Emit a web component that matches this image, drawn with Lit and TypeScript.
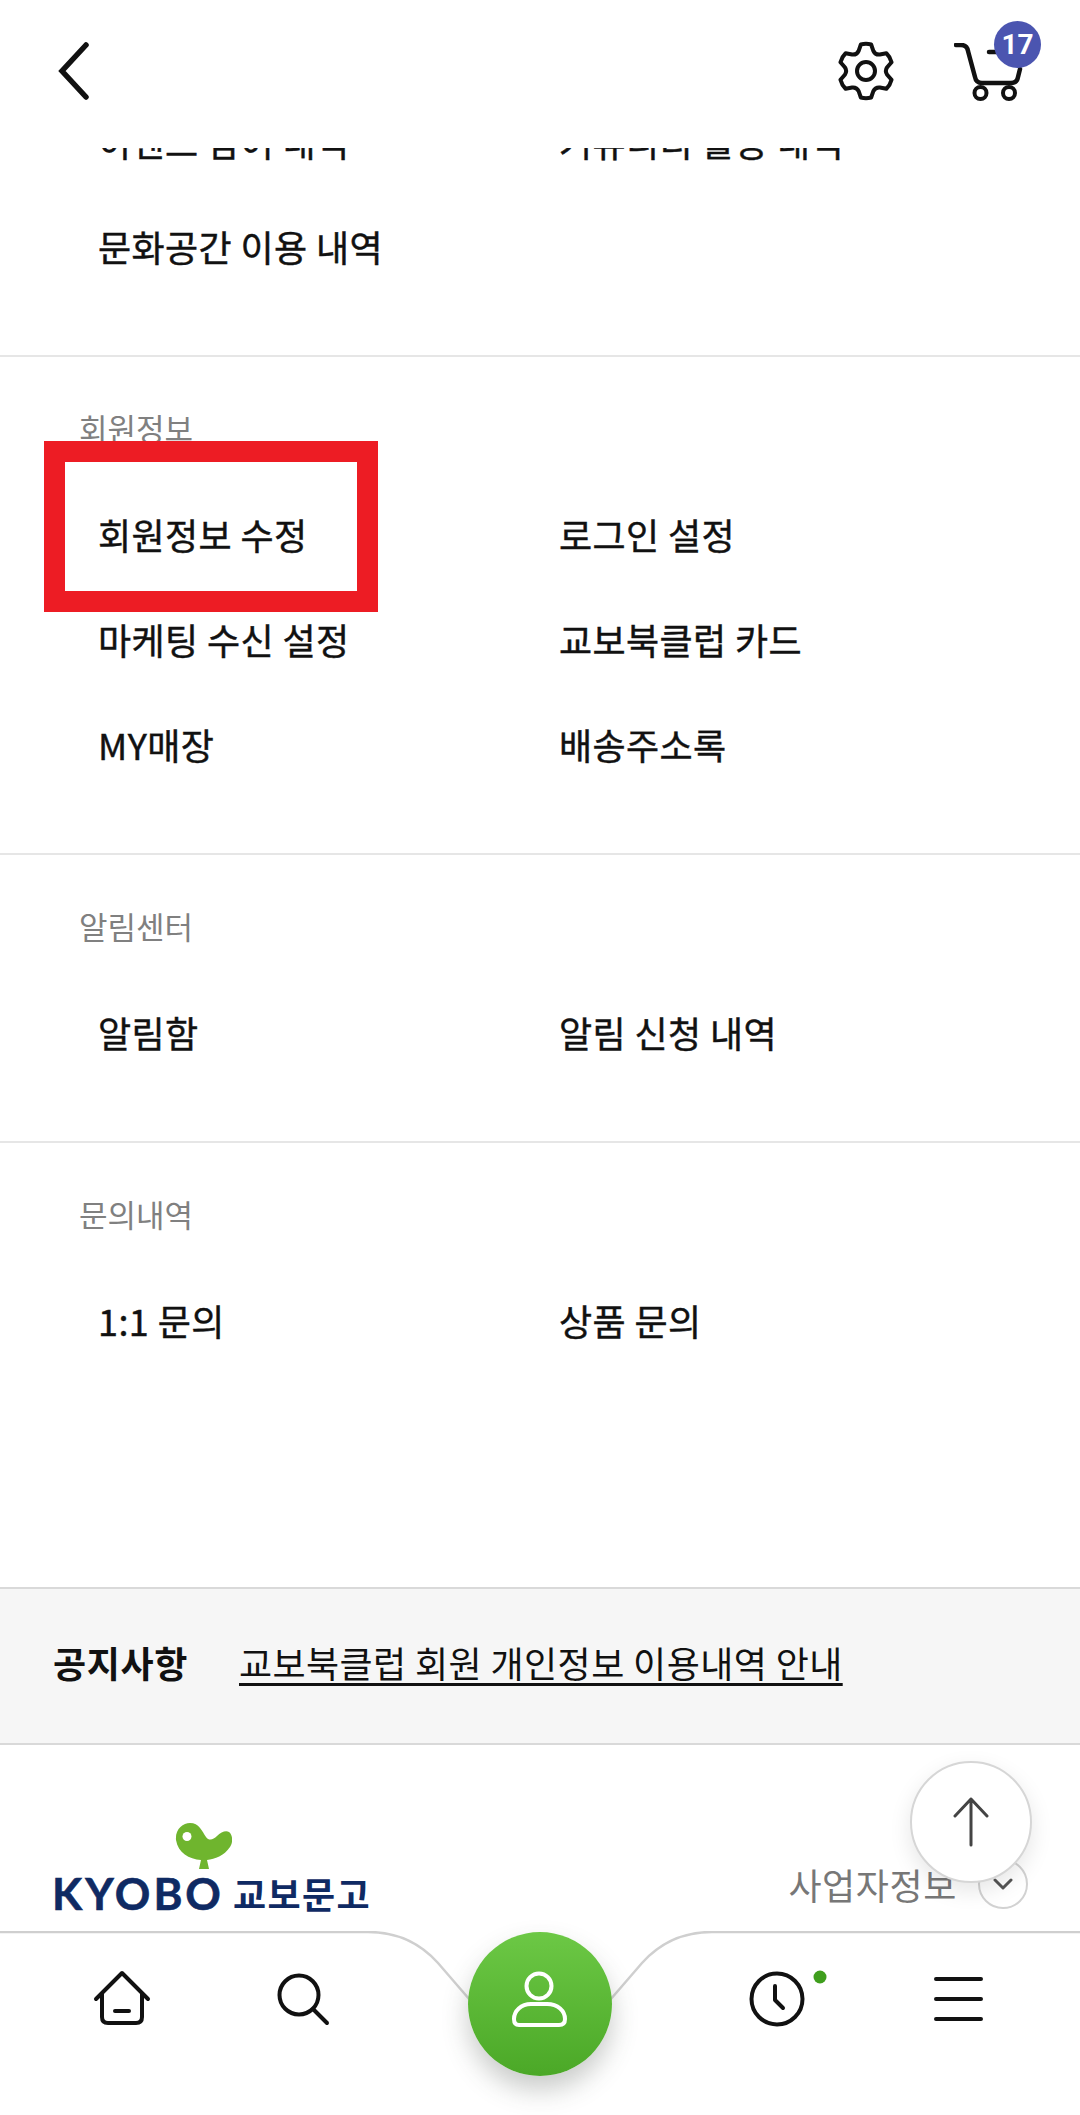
import { LitElement, html, css, svg } from "lit";
import { customElement } from "lit/decorators.js";

type Section = { label?: string; items: string[] };

const SECTIONS: Section[] = [
  { items: ["이벤트 참여 내역", "커뮤니티 활동 내역", "문화공간 이용 내역"] },
  { label: "회원정보", items: ["회원정보 수정", "로그인 설정", "마케팅 수신 설정", "교보북클럽 카드", "MY매장", "배송주소록"] },
  { label: "알림센터", items: ["알림함", "알림 신청 내역"] },
  { label: "문의내역", items: ["1:1 문의", "상품 문의"] },
];

function gearPath(cx: number, cy: number, ro: number, ri: number): string {
  const pt = (r: number, deg: number) => {
    const a = (deg * Math.PI) / 180;
    return `${(cx + r * Math.cos(a)).toFixed(2)} ${(cy + r * Math.sin(a)).toFixed(2)}`;
  };
  let d = "";
  for (let i = 0; i < 6; i++) {
    const c = -90 + i * 60;
    d += i === 0 ? `M${pt(ro, c - 11)}` : `L${pt(ro, c - 11)}`;
    d += `Q${pt(ro + 1, c)} ${pt(ro, c + 11)}`;
    d += `L${pt(ri + 1.5, c + 20)}`;
    d += `Q${pt(ri - 1.5, c + 30)} ${pt(ri + 1.5, c + 40)}`;
  }
  return d + "Z";
}

@customElement("app-root")
export class AppRoot extends LitElement {
  static styles = css`
    :host {
      display: block;
      position: relative;
      width: 1080px;
      height: 2115px;
      overflow: hidden;
      background: #fff;
      font-family: "Noto Sans CJK KR", "Noto Sans", sans-serif;
      color: #111;
    }
    .header {
      position: relative;
      z-index: 2;
      height: 148px;
      background: #fff;
      display: flex;
      align-items: flex-start;
      padding: 42px 0 0 58px;
      box-sizing: border-box;
    }
    .back { width: 32px; height: 58px; display: block; }
    .gear { width: 60px; height: 60px; display: block; margin-left: 746px; margin-top: -1px; }
    .cart { position: relative; width: 70px; height: 60px; margin-left: 58px; margin-top: 1px; }
    .cart svg { display: block; }
    .badge {
      position: absolute;
      left: 40px;
      top: -22px;
      width: 47px;
      height: 47px;
      border-radius: 50%;
      background: #4b55b0;
      color: #fff;
      font: 700 28px/47px Roboto, sans-serif;
      text-align: center;
    }
    .content { margin-top: -58px; }
    .section {
      padding: 48px 0 55px;
      border-bottom: 2px solid #e6e6e6;
    }
    .section.first { padding-top: 0; }
    .label {
      margin: 0 0 32px 79px;
      font-size: 31px;
      line-height: 46px;
      font-weight: 400;
      color: #808080;
    }
    .grid {
      display: grid;
      grid-template-columns: 461px 1fr;
      padding-left: 98px;
      grid-auto-rows: 105px;
      align-items: center;
    }
    .item {
      font-size: 36px;
      font-weight: 400;
      -webkit-text-stroke: 0.45px #111;
      letter-spacing: 0.4px;
      line-height: 103px;
      padding-bottom: 2px;
      white-space: nowrap;
      color: #111;
    }
    .section.last { border-bottom: 0; padding-bottom: 0; }
    .notice {
      margin-top: 213px;
      height: 158px;
      box-sizing: border-box;
      background: #f6f6f6;
      border-top: 2px solid #d9d9d9;
      border-bottom: 2px solid #d9d9d9;
      display: flex;
      align-items: center;
      padding: 0 0 8px 53px;
    }
    .notice b { font-size: 36px; font-weight: 700; letter-spacing: 0.6px; width: 186px; flex: none; }
    .notice a { font-size: 36px; font-weight: 400; letter-spacing: 0.4px; color: #111; text-decoration: underline; text-underline-offset: 5px; text-decoration-thickness: 3px; white-space: nowrap; }
    .footer {
      display: flex;
      justify-content: space-between;
      align-items: flex-start;
      padding: 78px 0 0 52px;
    }
    .bird { display: block; width: 57px; height: 47px; margin-left: 123px; }
    .word { display: flex; align-items: center; height: 44px; color: #0f2a63; margin-top: 1px; white-space: nowrap; width: 320px; }
    .word .en { font: 700 44px/44px Lato, sans-serif; -webkit-text-stroke: 0.6px #0f2a63; letter-spacing: 3px; width: 181px; flex: none; }
    .word .ko { font-size: 36px; font-weight: 700; letter-spacing: 1.4px; line-height: 44px; }
    .biz { display: flex; align-items: center; margin: 36px 52px 0 0; }
    .biz span { font-size: 36px; letter-spacing: 0.6px; line-height: 50px; color: #777; font-weight: 400; }
    .chev {
      width: 50px;
      height: 50px;
      margin-left: 21px;
      box-sizing: border-box;
      border: 2px solid #d2d2d2;
      border-radius: 50%;
      display: flex;
      align-items: center;
      justify-content: center;
    }
    .top {
      position: absolute;
      left: 910px;
      top: 1761px;
      width: 122px;
      height: 122px;
      box-sizing: border-box;
      border: 2px solid #d6d6d6;
      border-radius: 50%;
      background: #fff;
      box-shadow: 0 8px 22px rgba(0, 0, 0, 0.1);
      display: flex;
      align-items: center;
      justify-content: center;
      z-index: 3;
    }
    .nav {
      position: absolute;
      left: 0;
      top: 1931px;
      width: 1080px;
      height: 184px;
      z-index: 4;
    }
    .nav .bg { position: absolute; left: 0; top: 0; display: block; }
    .icons {
      position: relative;
      display: flex;
      align-items: flex-start;
      padding: 40px 0 0 94px;
    }
    .icons svg { display: block; flex: none; overflow: visible; }
    .fab {
      position: absolute;
      left: 468px;
      top: 1px;
      width: 144px;
      height: 144px;
      border-radius: 50%;
      background: linear-gradient(180deg, #6cc845 0%, #4ba827 100%);
      box-shadow: 0 14px 26px rgba(60, 70, 60, 0.28);
      display: flex;
      align-items: center;
      justify-content: center;
    }
    .mark {
      position: absolute;
      left: 44px;
      top: 441px;
      width: 334px;
      height: 171px;
      box-sizing: border-box;
      border: 21px solid #ed1c24;
      z-index: 1;
    }
  `;

  private section(s: Section, i: number) {
    const cls = "section" + (i === 0 ? " first" : "") + (i === SECTIONS.length - 1 ? " last" : "");
    return html`<section class=${cls}>
      ${s.label ? html`<h3 class="label">${s.label}</h3>` : ""}
      <div class="grid">${s.items.map((t) => html`<div class="item">${t}</div>`)}</div>
    </section>`;
  }

  render() {
    const L = "M0 1H368C400 1 422 14 438 32L476 76";
    const R = "M1080 1H712C680 1 658 14 642 32L604 76";
    return html`
      <header class="header">
        <svg class="back" viewBox="0 0 32 58" fill="none" stroke="#111" stroke-width="5.500" stroke-linecap="round" stroke-linejoin="miter">
          <path d="M28 3L4 29L28 55" />
        </svg>
        <svg class="gear" viewBox="0 0 60 60" fill="none" stroke="#111" stroke-width="4" stroke-linejoin="round">
          ${svg`<path d=${gearPath(30, 30, 27, 20)} /><circle cx="30" cy="30" r="9" />`}
        </svg>
        <div class="cart">
          <svg width="70" height="60" viewBox="0 0 70 60" fill="none" stroke="#111" stroke-width="4.5" stroke-linecap="round" stroke-linejoin="round">
            <path d="M2 2H7Q13 2 14 8L21 34Q22 40 28 40H57Q63 40 64 34L66 26" />
            <path d="M35 9H48" />
            <circle cx="26.500" cy="50" r="6" stroke-width="4" />
            <circle cx="55" cy="50" r="6" stroke-width="4" />
          </svg>
          <div class="badge">17</div>
        </div>
      </header>

      <main class="content">
        ${SECTIONS.map((s, i) => this.section(s, i))}
        <div class="notice">
          <b>공지사항</b>
          <a>교보북클럽 회원 개인정보 이용내역 안내</a>
        </div>
        <footer class="footer">
          <div>
            <svg class="bird" viewBox="0 0 57 47">
              <path fill="#6fb52e" d="M1 17C0 6 8 0 15 0C24 0 27 8 31 14C34 18 38 17 42 13C46 9 51 7 54 9C58 12 58 20 55 24C49 33 40 36 32 37L34 46H24L26 37C14 36 3 30 1 17Z" />
              <circle cx="12" cy="13.500" r="4.500" fill="#fff" />
            </svg>
            <div class="word"><span class="en">KYOBO</span><span class="ko">교보문고</span></div>
          </div>
          <div class="biz">
            <span>사업자정보</span>
            <div class="chev">
              <svg width="20" height="12" viewBox="0 0 20 12" fill="none" stroke="#555" stroke-width="3" stroke-linecap="round" stroke-linejoin="round"><path d="M2 2L10 10L18 2" /></svg>
            </div>
          </div>
        </footer>
      </main>

      <div class="mark"></div>

      <div class="top">
        <svg width="36" height="50" viewBox="0 0 36 50" fill="none" stroke="#444" stroke-width="3" stroke-linecap="round" stroke-linejoin="round">
          <path d="M18 2V48M2 19L18 2L34 19" />
        </svg>
      </div>

      <nav class="nav">
        <svg class="bg" width="1080" height="184" viewBox="0 0 1080 184">
          <path fill="#fff" d="${L}L540 90L604 76L642 32C658 14 680 1 712 1H1080V184H0Z" />
          <path fill="none" stroke="#cfcfcf" stroke-width="2.500" d=${L} />
          <path fill="none" stroke="#cfcfcf" stroke-width="2.500" d=${R} />
        </svg>
        <div class="icons">
          <svg width="56" height="54" viewBox="0 0 56 54" fill="none" stroke="#111" stroke-width="4" stroke-linecap="round" stroke-linejoin="round">
            <path d="M2 28L28 2L54 28" />
            <path d="M8 23V46Q8 52 14 52H42Q48 52 48 46V23" />
            <path d="M21 40H35" />
          </svg>
          <svg style="margin-left:128px" width="52" height="54" viewBox="0 0 52 54" fill="none" stroke="#111" stroke-width="4" stroke-linecap="round">
            <circle cx="21" cy="24" r="19.500" />
            <path d="M35 38L49 52" />
          </svg>
          <svg style="margin-left:419px" width="56" height="56" viewBox="0 0 56 56" fill="none" stroke="#111" stroke-width="4" stroke-linecap="round" stroke-linejoin="round">
            <circle cx="28" cy="28" r="25.500" />
            <path d="M26 15V29L34 37" />
            <circle cx="71" cy="6" r="6.500" fill="#3f9e1d" stroke="none" />
          </svg>
          <svg style="margin-left:129px" width="49" height="50" viewBox="0 0 49 50" fill="none" stroke="#111" stroke-width="4" stroke-linecap="round">
            <path d="M2 8H47M2 28H47M2 48H47" />
          </svg>
        </div>
        <div class="fab">
          <svg width="56" height="92" viewBox="0 0 56 92" fill="none" stroke="#fff" stroke-width="4" stroke-linejoin="round">
            <circle cx="27" cy="28" r="12.500" />
            <path d="M19 46H35C46 46 53 53 53 61Q53 67 47 67H7Q2 67 2 61C2 53 9 46 19 46Z" />
          </svg>
        </div>
      </nav>
    `;
  }
}
